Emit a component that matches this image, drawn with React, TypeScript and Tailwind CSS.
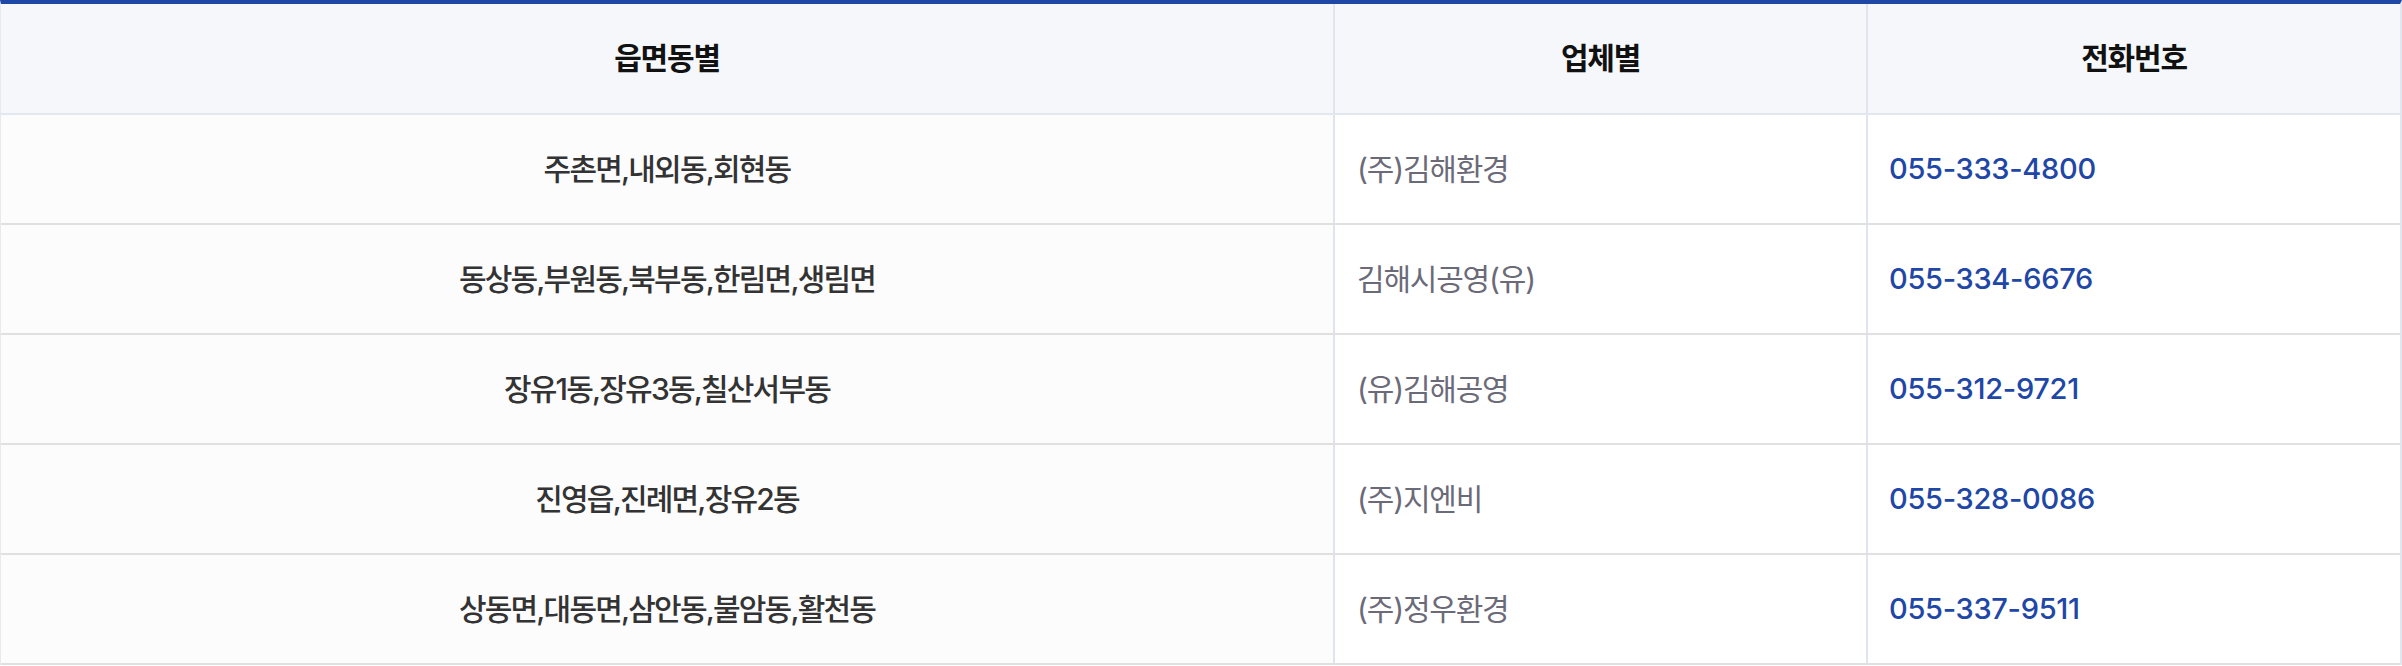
import React from 'react';

interface IRow {
  area: string
  company: string
  phone: string
}

const rows: IRow[] = [
  { area: '주촌면,내외동,회현동', company: '(주)김해환경', phone: '055-333-4800' },
  { area: '동상동,부원동,북부동,한림면,생림면', company: '김해시공영(유)', phone: '055-334-6676' },
  { area: '장유1동,장유3동,칠산서부동', company: '(유)김해공영', phone: '055-312-9721' },
  { area: '진영읍,진례면,장유2동', company: '(주)지엔비', phone: '055-328-0086' },
  { area: '상동면,대동면,삼안동,불암동,활천동', company: '(주)정우환경', phone: '055-337-9511' },
];

const font = "font-['Inter','Noto_Sans_CJK_KR',sans-serif]";

export default function App() {
  return (
    <div className={`w-[2402px] h-[666px] bg-white ${font}`}>
      <div className="border-t-4 border-t-[#1f47a6] border-l border-l-[#e6e9f1] border-r-2 border-r-[#e2e6f0]">
        <div className="grid grid-cols-[1332px_533px_1fr] h-[111px] bg-[#f6f7fb] border-b-2 border-b-[#e3e7f0] text-[30px] font-bold tracking-[-0.04em] text-[#111111]">
          <div className="flex items-center justify-center">읍면동별</div>
          <div className="flex items-center justify-center border-l-2 border-l-[#e0e4ef]">업체별</div>
          <div className="flex items-center justify-center border-l-2 border-l-[#e0e4ef]">전화번호</div>
        </div>
        {rows.map((row, index) => (
          <div key={index} className="grid grid-cols-[1332px_533px_1fr] h-[110px] border-b-2 border-b-[#e0e0e0]">
            <div className="flex items-center justify-center bg-[#fcfcfd] text-[30px] font-medium tracking-[-0.06em] text-[#333333]">
              {row.area}
            </div>
            <div className="flex items-center pl-[22px] border-l-2 border-l-[#e0e4ef] text-[30px] tracking-[-0.04em] text-[#6b6a78]">
              {row.company}
            </div>
            <div className="flex items-center pl-[21px] border-l-2 border-l-[#e0e4ef] text-[29px] font-medium tracking-[-0.01em] text-[#2046a6]">
              {row.phone}
            </div>
          </div>
        ))}
      </div>
    </div>
  );
}
